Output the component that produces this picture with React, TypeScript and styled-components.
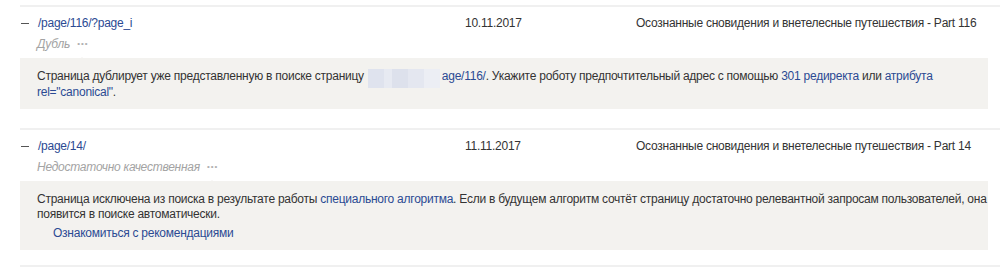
import React from "react";
import styled, { createGlobalStyle } from "styled-components";

const Global = createGlobalStyle`
  body {
    margin: 0;
    background: #fff;
    font-family: "Liberation Sans", Arial, sans-serif;
    font-size: 12px;
    letter-spacing: -0.25px;
    color: #333;
  }
`;

const List = styled.div`
  padding: 5px 0 0 20px;
  width: 1000px;
  box-sizing: border-box;
`;

const Item = styled.div`
  border-top: 2px solid #f0f0f0;
`;

const Head = styled.div`
  display: grid;
  grid-template-columns: 445px 171px 1fr;
  padding-top: 9px;
  white-space: nowrap;
`;

const UrlCell = styled.div`
  display: flex;
  flex-direction: column;
  gap: 7px;
`;

const UrlLine = styled.div`
  display: flex;
  align-items: center;
  line-height: 14px;
`;

const Minus = styled.span`
  display: inline-block;
  width: 8px;
  height: 1px;
  background: #555;
  margin: 0 9px 0 1px;
`;

const Link = styled.a`
  color: #2b4a93;
  text-decoration: none;
`;

const Status = styled.div`
  padding-left: 17px;
  font-style: italic;
  color: #a3a3a3;
  line-height: 14px;
  height: 14px;
  display: flex;
  align-items: center;
`;

const Dots = styled.span`
  position: relative;
  font-style: normal;
  color: #b0b0b0;
  margin-left: 7px;
  letter-spacing: 1px;
  font-size: 8px;
  line-height: 8px;
  &::after {
    content: "";
    position: absolute;
    left: 50%;
    top: 11px;
    margin-left: -7px;
    border: 6px solid transparent;
    border-bottom-color: #f3f2ef;
  }
`;

const Cell = styled.div`
  line-height: 14px;
  color: #333;
`;

const Note = styled.div<{ gap: number }>`
  background: #f3f2ef;
  width: 968px;
  box-sizing: border-box;
  padding: 11px 10px 9px 17px;
  line-height: 15px;
  margin-top: 7px;
  margin-bottom: ${({ gap }) => gap}px;
`;

const Line = styled.span`
  display: block;
  white-space: nowrap;
`;

const Hidden = styled.span`
  display: inline-block;
  width: 72px;
  height: 19px;
  vertical-align: -5px;
  margin: -3px 2px -3px 4px;
  background: linear-gradient(
    90deg,
    #dfe3ee 0 22%,
    #e7eaf2 22% 34%,
    #dde1ec 34% 55%,
    #e4e7f0 55% 78%,
    #eceef4 78% 100%
  );
`;

const More = styled.div`
  padding: 4px 0 0 16px;
`;

const BottomLine = styled.div`
  border-top: 2px solid #f0f0f0;
`;

export default function App() {
  return (
    <>
      <Global />
      <List>
        <Item>
          <Head>
            <UrlCell>
              <UrlLine>
                <Minus />
                <Link href="#">/page/116/?page_i</Link>
              </UrlLine>
              <Status>
                Дубль<Dots>•••</Dots>
              </Status>
            </UrlCell>
            <Cell>10.11.2017</Cell>
            <Cell>Осознанные сновидения и внетелесные путешествия - Part 116</Cell>
          </Head>
          <Note gap={19}>
            <Line>
              Страница дублирует уже представленную в поиске страницу
              <Hidden />
              <Link href="#">age/116/</Link>. Укажите роботу предпочтительный
              адрес с помощью <Link href="#">301 редиректа</Link> или{" "}
              <Link href="#">атрибута</Link>
            </Line>
            <Line>
              <Link href="#">rel="canonical"</Link>.
            </Line>
          </Note>
        </Item>
        <Item>
          <Head>
            <UrlCell>
              <UrlLine>
                <Minus />
                <Link href="#">/page/14/</Link>
              </UrlLine>
              <Status>
                Недостаточно качественная<Dots>•••</Dots>
              </Status>
            </UrlCell>
            <Cell>11.11.2017</Cell>
            <Cell>Осознанные сновидения и внетелесные путешествия - Part 14</Cell>
          </Head>
          <Note gap={15}>
            <Line>
              Страница исключена из поиска в результате работы{" "}
              <Link href="#">специального алгоритма</Link>. Если в будущем
              алгоритм сочтёт страницу достаточно релевантной запросам
              пользователей, она
            </Line>
            <Line>появится в поиске автоматически.</Line>
            <More>
              <Link href="#">Ознакомиться с рекомендациями</Link>
            </More>
          </Note>
        </Item>
        <BottomLine />
      </List>
    </>
  );
}
